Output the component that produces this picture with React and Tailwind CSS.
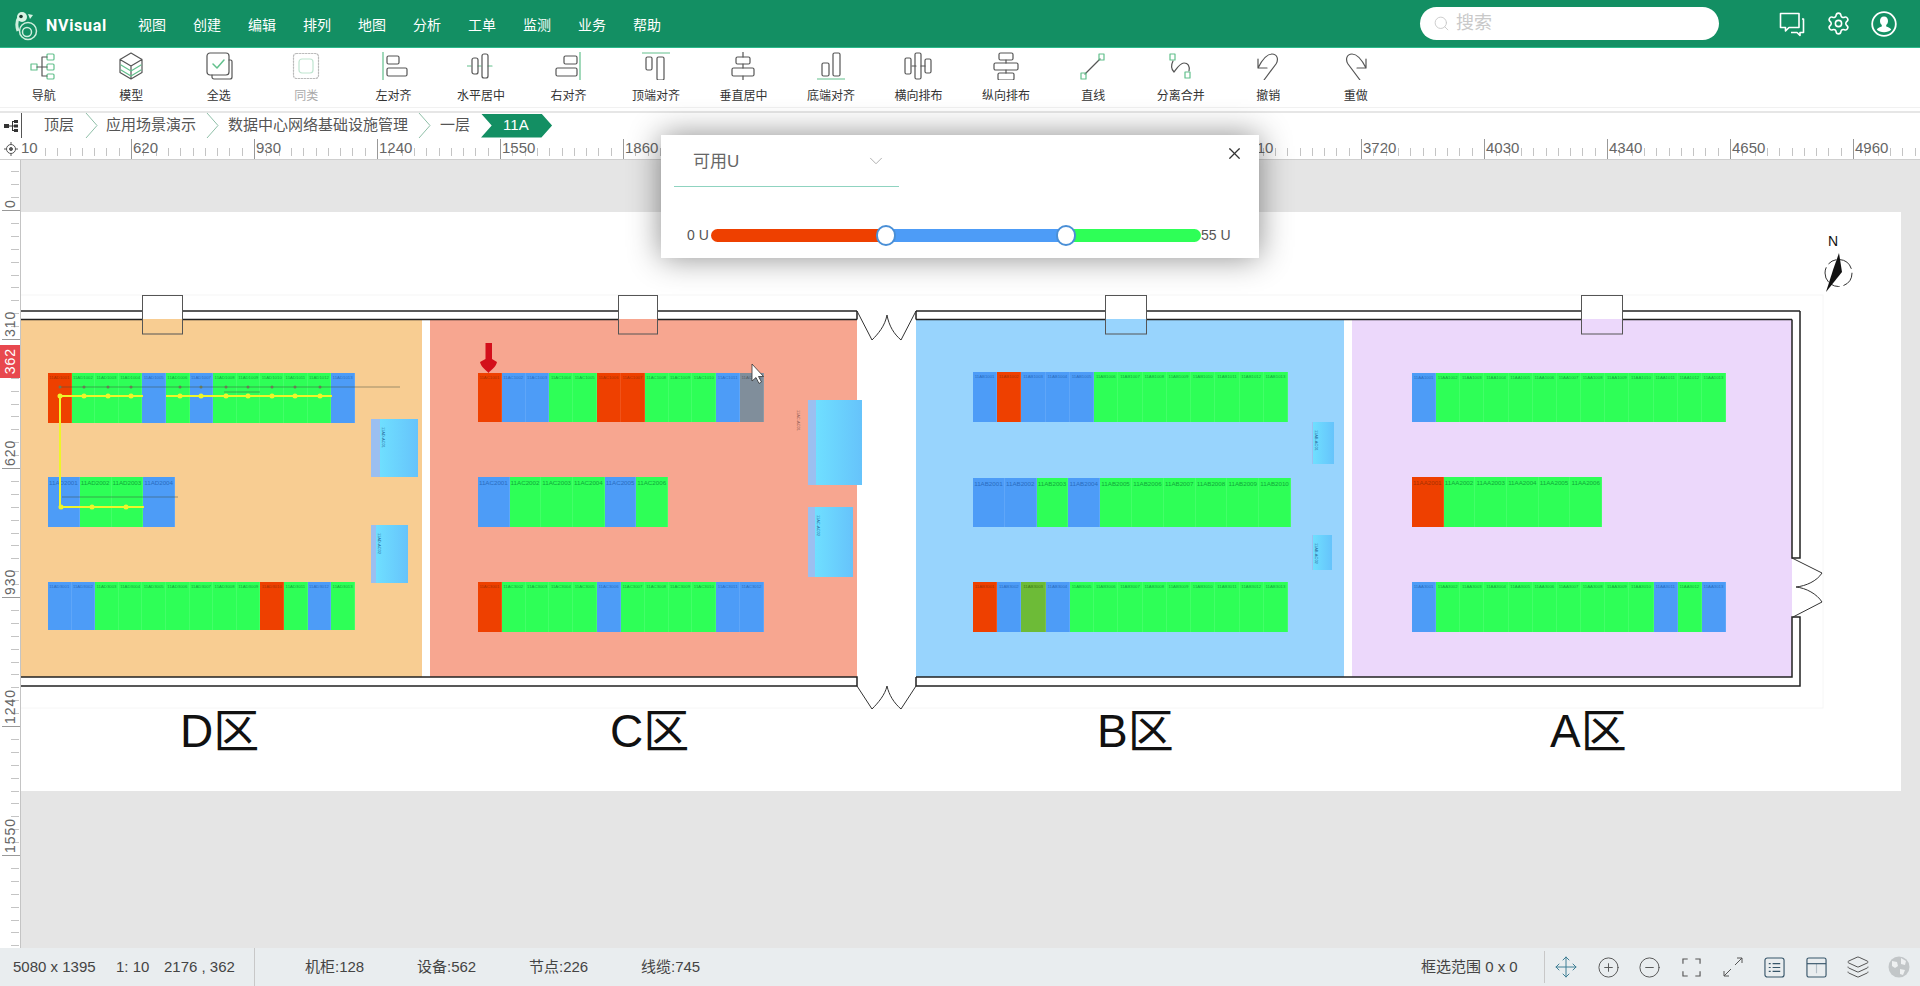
import React from 'react';
import { Settings, Move, CirclePlus, CircleMinus, Layers, Search, X, ChevronDown } from 'lucide-react';

const nav = ['视图','创建','编辑','排列','地图','分析','工单','监测','业务','帮助'];

const G = '#62c08c';
const Ic = ({ children, dim }) => (
  <svg viewBox="0 0 28 28" className={dim ? 'w-7 h-7 opacity-40' : 'w-7 h-7'} fill="none" stroke="#555" strokeWidth="1.2" strokeLinecap="round" strokeLinejoin="round">{children}</svg>
);
const tools = [
  ['导航', <Ic><g stroke={G}><rect x="1" y="12" width="6" height="6"/><rect x="17" y="2" width="7" height="6" rx="1"/><rect x="17" y="12" width="7" height="6" rx="1"/><rect x="17" y="22" width="7" height="5" rx="1"/></g><path d="M7 15h10M12 5v19M12 5h5M12 24h5"/></Ic>],
  ['模型', <Ic><path d="M14 1 25 7.5v13L14 27 3 20.5v-13zM3 7.5 14 14l11-6.500M14 14v13"/><path d="M4 13l10 6 10-6M4 18l10 6 10-6" stroke={G}/></Ic>],
  ['全选', <Ic><path d="M24 8h1.500a1.500 1.500 0 0 1 1.500 1.500V25a2 2 0 0 1-2 2H9a2 2 0 0 1-2-2v-2"/><rect x="2" y="1" width="22" height="22" rx="3"/><path d="M8 12l4 4 7-8" stroke={G} strokeWidth="1.500"/></Ic>],
  ['同类', <Ic dim><rect x="1.500" y="1.500" width="25" height="25" rx="3" strokeDasharray="1.500 1.500"/><rect x="7" y="7" width="14" height="14" rx="3" stroke={G}/></Ic>],
  ['左对齐', <Ic><path d="M3 0v28" stroke={G}/><rect x="7" y="4" width="12" height="8" rx="1.500"/><rect x="7" y="16" width="20" height="8" rx="1.500"/></Ic>],
  ['水平居中', <Ic><path d="M0 14h4M11 14h3M21 14h4" stroke={G}/><rect x="5" y="6" width="6" height="16" rx="2"/><rect x="15" y="2" width="6" height="24" rx="2"/></Ic>],
  ['右对齐', <Ic><path d="M25 0v28" stroke={G}/><rect x="9" y="4" width="13" height="8" rx="1.500"/><rect x="1" y="16" width="21" height="8" rx="1.500"/></Ic>],
  ['顶端对齐', <Ic><path d="M0 1h28" stroke={G}/><rect x="4" y="5" width="6" height="13" rx="1.500"/><rect x="15" y="5" width="7" height="23" rx="1.500"/></Ic>],
  ['垂直居中', <Ic><path d="M14 0v5M14 12v4M14 24v4"/><rect x="7" y="5" width="14" height="7" rx="1.500"/><rect x="3" y="16" width="22" height="8" rx="1.500"/></Ic>],
  ['底端对齐', <Ic><path d="M0 27h28" stroke={G}/><rect x="5" y="11" width="7" height="13" rx="1.500"/><rect x="16" y="1" width="7" height="23" rx="1.500"/></Ic>],
  ['横向排布', <Ic><path d="M8 14h4M17 14h4"/><rect x="1" y="6" width="6" height="16" rx="1.500"/><rect x="11" y="1" width="6" height="26" rx="1.500"/><rect x="21" y="7" width="6" height="14" rx="1.500"/></Ic>],
  ['纵向排布', <Ic><path d="M14 8v3M14 18v3"/><rect x="7" y="1" width="14" height="7" rx="1.500"/><rect x="2" y="11" width="24" height="7" rx="1.500"/><rect x="6" y="21" width="16" height="7" rx="1.500"/></Ic>],
  ['直线', <Ic><path d="M6 22 21 7"/><g stroke={G}><rect x="20" y="2" width="5" height="6"/><rect x="2" y="21" width="5" height="6"/></g></Ic>],
  ['分离合并', <Ic><path d="M6 9c-2 4-2 8 1 11 3-4 6-9 10-9 4 0 6 3 5 8"/><g stroke={G}><rect x="3" y="2" width="5" height="6"/><rect x="18" y="20" width="5" height="6"/></g></Ic>],
  ['撤销', <Ic><path d="M4 7v9h9M4 16C8 8 13 2 18 2c5 0 7 5 4 10L10 28"/></Ic>],
  ['重做', <Ic><path d="M24 7v9h-9M24 16C20 8 15 2 10 2 5 2 3 7 6 12l12 16"/></Ic>],
];

const crumbs = ['顶层','应用场景演示','数据中心网络基础设施管理','一层'];

const FILL = { r: 'bg-[#ee4000]', b: 'bg-[#4d9cf7]', g: 'bg-[#2eff57]', k: 'bg-[#808e9b]', o: 'bg-[#6dbb37]' };
const INK = { r: 'text-[#a83000]', b: 'text-[#2a6cc0]', g: 'text-[#10a83a]', k: 'text-[#555d66]', o: 'text-[#3d7a16]' };

const racks = [
  { x: 48, y: 373, w: 307, h: 50, p: '11AD1', f: 4.3, s: 'rgggbgbgggggb' },
  { x: 48, y: 477, w: 127, h: 50, p: '11AD2', f: 6.2, s: 'bggb' },
  { x: 48, y: 582, w: 307, h: 48, p: '11AD3', f: 4.3, s: 'bbgggggggrgbg' },
  { x: 478, y: 373, w: 286, h: 49, p: '11AC1', f: 4.3, s: 'rbbggrrgggbk' },
  { x: 478, y: 477, w: 190, h: 50, p: '11AC2', f: 6.2, s: 'bgggbg' },
  { x: 478, y: 582, w: 286, h: 50, p: '11AC3', f: 4.3, s: 'rggggbggggbb' },
  { x: 973, y: 372, w: 315, h: 50, p: '11AB1', f: 4.3, s: 'brbbbgggggggg' },
  { x: 973, y: 478, w: 318, h: 49, p: '11AB2', f: 6.2, s: 'bbgbgggggg' },
  { x: 973, y: 582, w: 315, h: 50, p: '11AB3', f: 4.3, s: 'rbobggggggggg' },
  { x: 1412, y: 373, w: 314, h: 49, p: '11AA1', f: 4.3, s: 'bgggggggggggg' },
  { x: 1412, y: 477, w: 190, h: 50, p: '11AA2', f: 6.2, s: 'rggggg' },
  { x: 1412, y: 582, w: 314, h: 50, p: '11AA3', f: 4.3, s: 'bgggggggggbgb' },
];

const acs = [
  { x: 371, y: 419, w: 47, h: 58, s: 9, t: '11AD-AC01' },
  { x: 371, y: 525, w: 37, h: 58, s: 5, t: '11AD-AC02' },
  { x: 808, y: 400, w: 54, h: 85, s: 8, t: '' },
  { x: 808, y: 507, w: 45, h: 70, s: 7, t: '11AC-AC02' },
  { x: 1312, y: 422, w: 22, h: 42, s: 1, t: '11AB-AC01' },
  { x: 1312, y: 535, w: 20, h: 35, s: 1, t: '11AB-AC02' },
];

const P = (x, y, w, h) => ({ left: x - 21, top: y - 212, width: w, height: h });

const range = (n) => Array.from({ length: n }, (_, i) => i);

function TopRuler() {
  return (
    <div className="relative h-[22px] bg-white border-b border-[#cfcfcf] overflow-hidden">
      <div className="absolute left-0 top-0 bottom-0 w-[21px] bg-white z-10 flex items-center justify-center">
        <svg viewBox="0 0 14 14" className="w-[14px] h-[14px] text-[#555]" fill="none" stroke="currentColor" strokeWidth="1">
          <circle cx="7" cy="7" r="4.500" /><circle cx="7" cy="7" r="1.500" fill="currentColor" /><path d="M7 0v2.500M7 11.500V14M0 7h2.500M11.500 7H14" />
        </svg>
      </div>
      {range(156).map((i) => {
        const x = 8 + i * 12.3;
        const major = i % 10 === 0;
        return major ? (
          <div key={i} style={{ left: x }} className="absolute top-[1px] bottom-0 w-px bg-[#999]" />
        ) : (
          <div key={i} style={{ left: x }} className="absolute top-[10px] h-[8px] w-px bg-[#c4c4c4]" />
        );
      })}
      {range(16).slice(1).map((k) => (
        <span key={k} style={{ left: 8 + k * 123 + 2 }} className="absolute top-[1px] text-[15px] leading-[18px] text-[#666]">{310 + k * 310}</span>
      ))}
      <span className="absolute left-[21px] top-[1px] text-[15px] leading-[18px] text-[#666] bg-white z-10">10</span>
    </div>
  );
}

function LeftRuler() {
  const labels = [0, 310, 620, 930, 1240, 1550];
  return (
    <div className="relative w-[21px] shrink-0 bg-white border-r border-[#c4c4c4] overflow-hidden">
      {range(70).map((i) => {
        const y = 50 + (i - 10) * 12.9;
        const major = (i - 10) % 10 === 0;
        return major ? (
          <div key={i} style={{ top: y }} className="absolute left-[2px] right-0 h-px bg-[#999]" />
        ) : (
          <div key={i} style={{ top: y }} className="absolute left-[11px] w-[8px] h-px bg-[#c4c4c4]" />
        );
      })}
      {labels.map((v, i) => (
        <span key={v} style={{ top: 50 + i * 129 - 2 }} className="absolute left-[1px] h-0 w-[18px] text-[14px] leading-[18px] tracking-[1px] text-[#666] [writing-mode:vertical-rl] rotate-180">
          <span className="block -translate-y-full">{v}</span>
        </span>
      ))}
      <div className="absolute left-0 top-[185px] w-[20px] h-[33px] bg-[#e8484e] flex items-center justify-center">
        <span className="text-white text-[14px] leading-none tracking-[1px] [writing-mode:vertical-rl] rotate-180">362</span>
      </div>
    </div>
  );
}

function Rack({ r }) {
  return (
    <div className="absolute flex" style={P(r.x, r.y, r.w, r.h)}>
      {r.s.split('').map((c, i) => (
        <div key={i} className={`${FILL[c]} flex-1 min-w-0 overflow-hidden border-r border-white/10 flex justify-center`}>
          <span className={`${INK[c]} mt-[3px] whitespace-nowrap leading-none`} style={{ fontSize: r.f }}>{r.p + String(i + 1).padStart(3, '0')}</span>
        </div>
      ))}
    </div>
  );
}

function Plan() {
  const W = '#222';
  const topSegs = [[21, 142], [182, 618], [657, 857], [916, 1105], [1146, 1581], [1622, 1800]];
  const doors = [142, 618, 1105, 1581];
  const dw = [40, 39, 41, 41];
  const dots1 = [60, 84, 108, 131, 180, 201, 226, 248, 272, 295, 320];
  return (
    <div className="relative h-[579px] mr-[19px] bg-white">
      <div className="absolute bg-[#f8cd92] left-0 top-[107px] w-[401px] h-[358px]" />
      <div className="absolute bg-[#f7a690] left-[409px] top-[107px] w-[427px] h-[358px]" />
      <div className="absolute bg-[#98d4fd] left-[895px] top-[107px] w-[428px] h-[358px]" />
      <div className="absolute bg-[#ecd8fb] left-[1331px] top-[107px] w-[440px] h-[358px]" />

      {racks.map((r) => <Rack key={r.p} r={r} />)}

      {acs.map((a, i) => (
        <div key={i} className="absolute flex" style={P(a.x, a.y, a.w, a.h)}>
          <div className="bg-[#9bbff0] shrink-0" style={{ width: a.s }} />
          <div className="flex-1 bg-gradient-to-r from-[#6fdfff] to-[#66c3fb] relative overflow-hidden">
            <span className="absolute left-[1px] top-[8px] text-[4px] leading-none text-[#2a6a99] [writing-mode:vertical-rl] whitespace-nowrap">{a.t}</span>
          </div>
        </div>
      ))}
      <span className="absolute left-[775px] top-[198px] text-[4px] leading-none text-[#8a5a55] [writing-mode:vertical-rl] whitespace-nowrap">11AC-AC01</span>

      <svg className="absolute inset-0 w-full h-full pointer-events-none" viewBox="21 212 1880 579" fill="none">
        <rect x="1" y="295" width="1822" height="413" stroke="#f6f6f6" />
        {doors.map((x, i) => <rect key={x} x={x} y="295" width={dw[i]} height="24" fill="#fff" />)}
        {topSegs.map(([a, b]) => (
          <g key={a} stroke={W} strokeWidth="1.500">
            <path d={`M${a} 311H${b}`} />
            <path d={`M${a} 319.500H${Math.min(b, 1792)}`} />
          </g>
        ))}
        {doors.map((x, i) => <rect key={x} x={x + 0.5} y="295.500" width={dw[i]} height="38.500" stroke="#555" />)}
        <path d="M21 686H857V677H21M916 677V686H1800V617H1792V677H916M857 311V319.500M916 311V319.500M1800 311V558H1792V319.500" stroke={W} strokeWidth="1.500" />
        <path d="M857 311 872 340C878 334 885 326 887 315 889 326 894 334 901 340L916 311" stroke="#333" />
        <path d="M857 686 872 709C878 703 885 695 887 686 889 695 894 703 901 709L916 686" stroke="#333" />
        <path d="M1792 558 1822 573C1817 581 1806 586 1796 587 1806 588 1817 594 1822 602L1793 617" stroke="#333" />

        <path d="M61 387H400M62 497H178M224 392H260" stroke="#3a4a3a" strokeOpacity=".6" strokeWidth=".800" />
        {dots1.map((x) => <circle key={x} cx={x} cy="387" r="1.500" fill="#6b7a55" />)}
        <path d="M60 396H143M166 396H332M60 396V507H144" stroke="#eef52a" strokeWidth="2" />
        {dots1.map((x) => <circle key={x} cx={x} cy="396" r="2.500" fill="#eef52a" />)}
        {[61, 92, 126].map((x) => <circle key={x} cx={x} cy="507" r="2.500" fill="#eef52a" />)}

        <path d="M485.500 343H492V359L497 362C496 367 491 370 488.500 373 486 370 481 367 480 362L485.500 359Z" fill="#d30f1b" />
        <path d="M752 364V381L756 377.500 759 383.500 761.500 382 758.500 376.500H763.500Z" fill="#fff" stroke="#333" strokeWidth=".800" />

        <circle cx="1838.500" cy="273" r="13.500" stroke="#333" strokeDasharray="16 4 9 3" />
        <path d="M1839 253 1842 272 1826 292 1833 270Z" fill="#111" />
      </svg>

      <span className="absolute left-[1807px] top-[22px] text-[14px] leading-none text-[#111]">N</span>

      <div className="absolute left-[159px] top-[494px] text-[46px] leading-[50px] text-[#111]">D区</div>
      <div className="absolute left-[589px] top-[494px] text-[46px] leading-[50px] text-[#111]">C区</div>
      <div className="absolute left-[1076px] top-[494px] text-[46px] leading-[50px] text-[#111]">B区</div>
      <div className="absolute left-[1529px] top-[494px] text-[46px] leading-[50px] text-[#111]">A区</div>
    </div>
  );
}

function StatIcon({ children }) {
  return <div className="w-[41.600px] flex justify-center text-[#555]">{children}</div>;
}

export default function App() {
  return (
    <div className="relative w-[1920px] h-[986px] overflow-hidden flex flex-col bg-white font-['Liberation_Sans','Noto_Sans_CJK_SC',sans-serif] text-[#333]">
      {/* header */}
      <header className="h-[48px] shrink-0 bg-[#138f63] border-b border-[#2cb98b] flex items-center text-white">
        <svg viewBox="0 0 24 30" className="ml-[14px] mt-[4px] w-[24px] h-[30px]" fill="none">
          <circle cx="14" cy="20" r="8.500" stroke="#cfeedd" strokeWidth="1.500" />
          <circle cx="13" cy="21" r="4.500" stroke="#cfeedd" strokeWidth="1.500" />
          <path d="M4 20C2 14 3 9 5 6" stroke="#cfeedd" strokeWidth="3" />
          <circle cx="8" cy="6" r="5" fill="#d8f3e4" />
          <circle cx="7" cy="5.500" r="1.800" fill="#1c3b30" />
          <path d="M14 3l5 1-3 4z" fill="#d8f3e4" />
        </svg>
        <span className="ml-[8px] mt-[4px] w-[62px] text-[16px] font-bold tracking-[0.7px] whitespace-nowrap font-['Roboto','Liberation_Sans',sans-serif]">NVisual</span>
        <nav className="ml-[30px] mt-[4px] flex gap-[27px] text-[14px]">
          {nav.map((n) => <span key={n} className="w-[28px]">{n}</span>)}
        </nav>
        <div className="ml-auto w-[299px] h-[33px] rounded-full bg-white flex items-center pl-[13px] text-[#c9c9c9]">
          <Search size={17} strokeWidth={1.3} />
          <span className="ml-[6px] text-[18px]">搜索</span>
        </div>
        <svg viewBox="0 0 26 26" className="ml-[60px] w-[26px] h-[26px]" fill="none" stroke="#fff" strokeWidth="1.600" strokeLinejoin="round">
          <path d="M1.500 2.500h18.500v14H10l-3.500 3.500v-3.500H1.500z" />
          <path d="M23 8h1.500v13.500H21v3l-3-3h-6" />
        </svg>
        <Settings className="ml-[21px]" size={25} strokeWidth={1.500} />
        <svg viewBox="0 0 26 26" className="ml-[20px] mr-[23px] w-[26px] h-[26px]" fill="none">
          <circle cx="13" cy="13" r="11.800" stroke="#fff" strokeWidth="1.800" />
          <path d="M13 5.500c2.600 0 4 2 4 4.400 0 1.800-.8 3.200-1.800 4.200v1.400c2 .7 4.300 1.500 5 3.200-1.600 1.500-4.400 2.500-7.200 2.500s-5.600-1-7.200-2.500c.7-1.700 3-2.500 5-3.200v-1.400C9.800 13.100 9 11.700 9 9.900c0-2.400 1.400-4.400 4-4.400z" fill="#fff" />
        </svg>
      </header>

      {/* toolbar */}
      <div className="h-[60px] shrink-0 bg-white border-b border-[#f1f1f1] flex pt-[4px]">
        {tools.map(([label, icon]) => (
          <div key={label} className="w-[87.470px] flex flex-col items-center">
            {icon}
            <span className={label === '同类' ? 'mt-[8px] text-[12px] leading-[16px] text-[#aaa]' : 'mt-[8px] text-[12px] leading-[16px] text-[#333]'}>{label}</span>
          </div>
        ))}
      </div>

      {/* breadcrumb */}
      <div className="mt-[3px] h-[27px] shrink-0 border-t-2 border-[#e6e6e6] flex items-center bg-white text-[15px] text-[#555]">
        <div className="w-[22px] h-full border-r border-[#555] flex items-center justify-center">
          <svg viewBox="0 0 14 12" className="w-[14px] h-[12px]" fill="#333"><rect x="0" y="4" width="5" height="4" /><rect x="10" y="0" width="4" height="3" /><rect x="10" y="4.500" width="4" height="3" /><rect x="10" y="9" width="4" height="3" /><path d="M5 5.500h3V1h2v1H9v3.500h1v1H9V10h1v1H8V6.500H5z" /></svg>
        </div>
        {crumbs.map((c, i) => (
          <React.Fragment key={c}>
            <span className={['ml-[22px]', 'ml-[8px]', 'ml-[9px]', 'ml-[9px]'][i]}>{c}</span>
            <svg viewBox="0 0 13 25" className={['ml-[11px]', 'ml-[10px]', 'ml-[10px]', 'hidden'][i] + ' w-[13px] h-[25px]'} fill="none" stroke="#8fbfa8"><path d="M1 0l11 12.500L1 25" /></svg>
          </React.Fragment>
        ))}
        <div className="ml-[11px] w-[71px] h-[24px] bg-[#138f63] text-white flex items-center pl-[22px] [clip-path:polygon(0_0,85%_0,100%_50%,85%_100%,0_100%,15%_50%)]">11A</div>
      </div>

      {/* rulers + canvas */}
      <TopRuler />
      <div className="flex-1 flex min-h-0">
        <LeftRuler />
        <div className="flex-1 bg-[#e5e5e5] pt-[52px] min-w-0 overflow-hidden">
          <Plan />
        </div>
      </div>

      {/* status bar */}
      <footer className="h-[38px] shrink-0 bg-[#e9edef] flex items-center text-[15px] text-[#444]">
        <span className="ml-[13px] w-[103px] whitespace-nowrap">5080 x 1395</span>
        <span className="w-[48px]">1: 10</span>
        <span className="w-[90px] whitespace-nowrap">2176 , 362</span>
        <div className="h-full w-px bg-[#c8c8c8]" />
        <span className="ml-[50px] w-[112px]">机柜:128</span>
        <span className="w-[112px]">设备:562</span>
        <span className="w-[112px]">节点:226</span>
        <span>线缆:745</span>
        <span className="ml-auto">框选范围 0 x 0</span>
        <div className="ml-[26px] h-[32px] w-px bg-[#c8c8c8]" />
        <div className="ml-[1px] flex items-center">
          <StatIcon><Move size={24} strokeWidth={1} className="text-[#3f7f95]" /></StatIcon>
          <StatIcon><CirclePlus size={23} strokeWidth={1} /></StatIcon>
          <StatIcon><CircleMinus size={23} strokeWidth={1} /></StatIcon>
          <StatIcon>
            <svg viewBox="0 0 20 20" className="w-[19px] h-[19px]" fill="none" stroke="#555" strokeWidth="1.200"><path d="M6 1H1v5M14 1h5v5M1 14v5h5M19 14v5h-5" /></svg>
          </StatIcon>
          <StatIcon>
            <svg viewBox="0 0 20 20" className="w-[20px] h-[20px]" fill="none" stroke="#555" strokeWidth="1"><path d="M1 19 8 12M12 8l7-7M14 1h5v5M1 14v5h5" /></svg>
          </StatIcon>
          <StatIcon>
            <svg viewBox="0 0 22 22" className="w-[21px] h-[21px]" fill="none" stroke="#37566a" strokeWidth="1.200"><rect x="1" y="1" width="20" height="20" rx="2.500" /><path d="M5 7h2M9 7h8M5 11h2M9 11h8M5 15h2M9 15h8" /></svg>
          </StatIcon>
          <StatIcon>
            <svg viewBox="0 0 22 22" className="w-[21px] h-[21px]" fill="none" stroke="#37566a" strokeWidth="1.200"><rect x="1" y="1" width="20" height="20" rx="2" /><path d="M1 7h20" /><path d="M11 7v10" strokeOpacity=".3" /></svg>
          </StatIcon>
          <StatIcon><Layers size={24} strokeWidth={1} /></StatIcon>
          <StatIcon>
            <svg viewBox="0 0 22 22" className="w-[22px] h-[22px]"><circle cx="11" cy="11" r="10.500" fill="#c2c6c8" /><path d="M4 5l5 1 1 4-3 2-3-2zM13 2l5 3-1 4-4-1zM12 13l5 1-2 5-3-1z" fill="#eef0f1" /></svg>
          </StatIcon>
        </div>
      </footer>

      {/* floating panel */}
      <div className="absolute left-[661px] top-[135px] w-[598px] h-[123px] bg-white shadow-[0_0_30px_rgba(0,0,0,0.45)] flex flex-col text-[#555]">
        <div className="ml-[13px] mt-[8px] w-[225px] h-[44px] border-b border-[#8fd3c0] flex items-start pt-[6px] pl-[19px] relative">
          <span className="text-[17px] text-[#666]">可用U</span>
          <ChevronDown size={22} strokeWidth={1} className="absolute right-[12px] top-[7px] text-[#aaa]" />
        </div>
        <X size={19} strokeWidth={1.500} className="absolute right-[15px] top-[9px] text-[#333]" />
        <div className="mt-[38px] ml-[26px] flex items-center text-[14px]">
          <span className="w-[24px] whitespace-nowrap">0 U</span>
          <div className="relative w-[490px] h-[13px]">
            <div className="flex h-full rounded-full overflow-hidden">
              <div className="w-[175px] bg-[#ee4000]" />
              <div className="w-[180px] bg-[#4d9cf7]" />
              <div className="flex-1 bg-[#2eff57]" />
            </div>
            <div className="absolute left-[165px] top-[-4px] w-[20px] h-[21px] rounded-full bg-white border-2 border-[#4a8fd6]" />
            <div className="absolute left-[345px] top-[-4px] w-[20px] h-[21px] rounded-full bg-white border-2 border-[#4a8fd6]" />
          </div>
          <span className="whitespace-nowrap">55 U</span>
        </div>
      </div>
    </div>
  );
}
